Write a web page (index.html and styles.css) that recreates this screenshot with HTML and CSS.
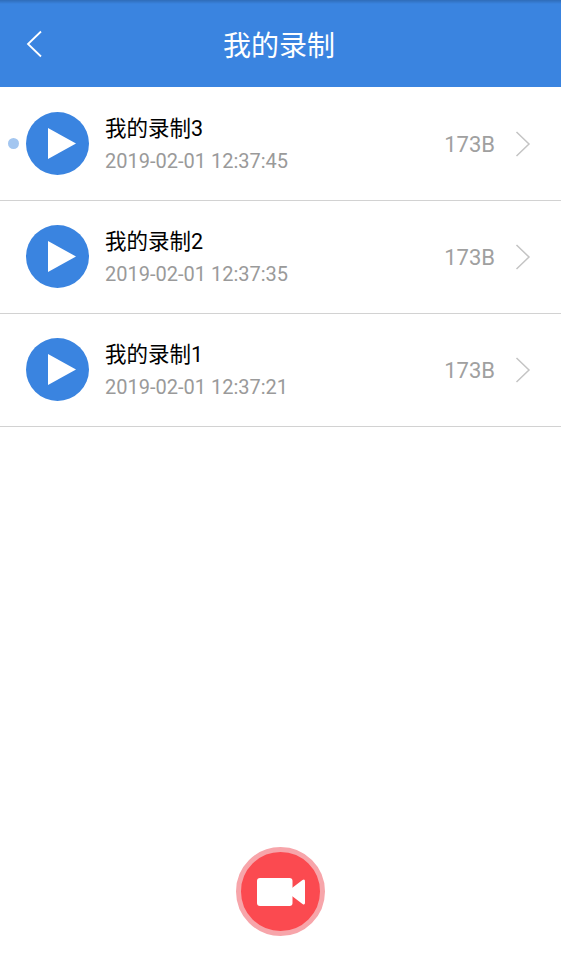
FILE: index.html
```html
<!DOCTYPE html>
<html lang="zh">
<head>
<meta charset="utf-8">
<title>我的录制</title>
<link rel="stylesheet" href="styles.css">
</head>
<body>
<div class="app">
  <header class="bar">
    <svg class="back" width="18" height="28" viewBox="0 0 18 28"><path d="M15 1.500 L2 14 L15 26.500" fill="none" stroke="#fff" stroke-width="1.800"/></svg>
    <h1 class="title">我的录制</h1>
  </header>
  <ul class="list">
    <li class="row">
      <span class="dot"></span>
      <svg class="play" width="63" height="63" viewBox="0 0 63 63"><circle cx="31.500" cy="31.500" r="31.500" fill="#3a84e0"/><path d="M22 16 L50 31.500 L22 47 Z" fill="#fff"/></svg>
      <div class="info"><div class="name">我的录制3</div><div class="time">2019-02-01 12:37:45</div></div>
      <span class="size">173B</span>
      <svg class="chev" width="16" height="26" viewBox="0 0 16 26"><path d="M1.500 1 L14 13 L1.500 25" fill="none" stroke="#c4c4c4" stroke-width="1.500"/></svg>
    </li>
    <li class="row">
      <svg class="play" width="63" height="63" viewBox="0 0 63 63"><circle cx="31.500" cy="31.500" r="31.500" fill="#3a84e0"/><path d="M22 16 L50 31.500 L22 47 Z" fill="#fff"/></svg>
      <div class="info"><div class="name">我的录制2</div><div class="time">2019-02-01 12:37:35</div></div>
      <span class="size">173B</span>
      <svg class="chev" width="16" height="26" viewBox="0 0 16 26"><path d="M1.500 1 L14 13 L1.500 25" fill="none" stroke="#c4c4c4" stroke-width="1.500"/></svg>
    </li>
    <li class="row">
      <svg class="play" width="63" height="63" viewBox="0 0 63 63"><circle cx="31.500" cy="31.500" r="31.500" fill="#3a84e0"/><path d="M22 16 L50 31.500 L22 47 Z" fill="#fff"/></svg>
      <div class="info"><div class="name">我的录制1</div><div class="time">2019-02-01 12:37:21</div></div>
      <span class="size">173B</span>
      <svg class="chev" width="16" height="26" viewBox="0 0 16 26"><path d="M1.500 1 L14 13 L1.500 25" fill="none" stroke="#c4c4c4" stroke-width="1.500"/></svg>
    </li>
  </ul>
  <div class="spacer"></div>
  <footer class="foot">
    <button class="rec" type="button" aria-label="录制">
      <svg width="48" height="28" viewBox="0 0 48 28"><rect x="0" y="0" width="35.500" height="28" rx="3" fill="#fff"/><path d="M35 10 L45.500 2 Q48 0.500 48 3.500 L48 24.500 Q48 27.500 45.500 26 L35 18 Z" fill="#fff"/></svg>
    </button>
  </footer>
</div>
</body>
</html>
```
FILE: styles.css
```css
* { box-sizing: border-box; }
html, body { margin: 0; padding: 0; background: #fff; }
body { font-family: Roboto, "Noto Sans CJK SC", sans-serif; }
.app { width: 561px; height: 960px; display: flex; flex-direction: column; overflow: hidden; }
.bar {
  height: 87px; flex: none; background: #3a84e0; position: relative;
  display: flex; align-items: center; justify-content: center;
  background-image: linear-gradient(#2f6cb8, #3a84e0 4px);
}
.back { position: absolute; left: 26px; top: 30px; }
.title { margin: 0 3px 0 0; font-size: 28px; font-weight: 400; color: #fff; line-height: 1; font-family: "Noto Sans CJK SC", sans-serif; }
.list { list-style: none; margin: 0; padding: 1px 0 0; }
.row {
  height: 113px; display: flex; align-items: center; padding-left: 26px; padding-right: 30px;
  border-bottom: 1px solid #d2d2d2; position: relative;
}
.dot { position: absolute; left: 8px; top: 50px; width: 11px; height: 11px; border-radius: 50%; background: #a3c6f0; }
.play { flex: none; margin-top: -2px; }
.info { margin-left: 16px; flex: 1; }
.name { font-size: 21.500px; line-height: 28px; color: #000; }
.time { font-size: 20px; line-height: 24px; color: #9a9a9a; margin-top: 6px; margin-bottom: 1px; }
.size { font-size: 22px; color: #a0a0a0; margin-right: 20px; }
.chev { flex: none; }
.spacer { flex: 1; }
.foot { display: flex; justify-content: center; padding-bottom: 24px; }
.rec {
  width: 89px; height: 89px; border-radius: 50%; padding: 0; border: 5px solid #f7a5aa;
  background: #fb4a50; display: flex; align-items: center; justify-content: center;
}
```
